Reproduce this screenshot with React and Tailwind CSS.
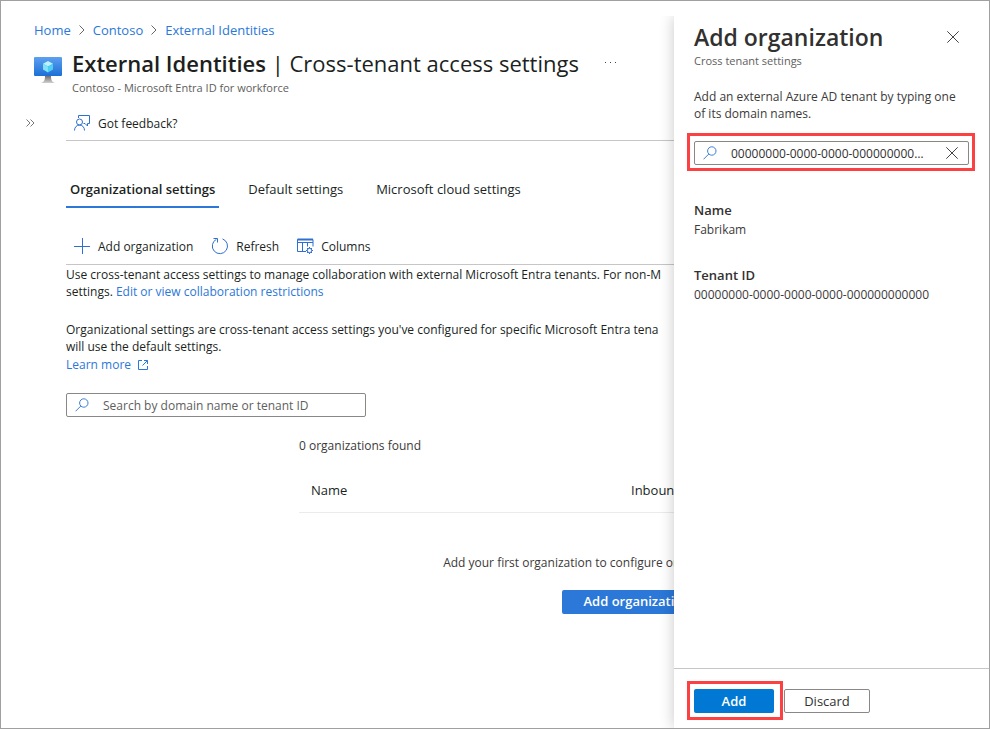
import React from "react";

const link = "text-[#2b78d8] hover:underline";

function Chevron() {
  return (
    <svg className="h-3 w-2 shrink-0" viewBox="0 0 8 12" fill="none" stroke="#666" aria-hidden="true">
      <path d="M1.5 1.5 6 6 1.5 10.5" />
    </svg>
  );
}

function MonitorIcon() {
  return (
    <svg className="mt-[9px] h-7 w-7 shrink-0" viewBox="0 0 28 28" aria-hidden="true">
      <defs>
        <linearGradient id="screen" x1="0" y1="0" x2="0" y2="1">
          <stop offset="0" stopColor="#5ea0ef" />
          <stop offset="1" stopColor="#1b6fd6" />
        </linearGradient>
        <linearGradient id="stand" x1="0" y1="0" x2="0" y2="1">
          <stop offset="0" stopColor="#707070" />
          <stop offset="1" stopColor="#d0d0d0" />
        </linearGradient>
      </defs>
      <rect x="0" y="1" width="28" height="19" rx="1" fill="url(#screen)" />
      <path d="M11 20h6c0 4 1 6 4 7H7c3-1 4-3 4-7z" fill="url(#stand)" />
      <path d="M14 5l5 2.8-5 2.8-5-2.8z" fill="#b8f2fd" />
      <path d="M9 7.8l5 2.8v5.8l-5-2.9z" fill="#7fe2fb" />
      <path d="M19 7.8l-5 2.8v5.8l5-2.9z" fill="#50cdf5" />
    </svg>
  );
}

function FeedbackIcon() {
  return (
    <svg className="h-4 w-4 shrink-0" viewBox="0 0 16 16" fill="none" stroke="#2f6fd0" aria-hidden="true">
      <circle cx="5.5" cy="7" r="3" />
      <path d="M.5 15.5c0-3.2 2-5.4 5-5.4s5 2.2 5 5.4M4.5 3V.5h11v8h-2v2.5L11 8.5H9.5" />
    </svg>
  );
}

function PlusIcon() {
  return (
    <svg className="h-4 w-4 shrink-0" viewBox="0 0 16 16" fill="none" stroke="#2f6fd0" aria-hidden="true">
      <path d="M8.5 0v16M0 8.5h16" />
    </svg>
  );
}

function RefreshIcon() {
  return (
    <svg className="h-[18px] w-[18px] shrink-0" viewBox="0 0 18 18" fill="none" stroke="#2f6fd0" aria-hidden="true">
      <path d="M11.5 1.9A7.6 7.6 0 1 1 5.4 2.3M2.5 1.5h4v4" />
    </svg>
  );
}

function ColumnsIcon() {
  return (
    <svg className="h-[17px] w-[17px] shrink-0" viewBox="0 0 17 17" fill="none" stroke="#2f6fd0" aria-hidden="true">
      <path d="M9 13.5H.5v-12h15.5v7M.5 4.5H16M5.5 4.5v9M10.5 4.5v4" />
      <path d="M.5 1.5H16" strokeWidth="2" />
      <circle cx="12.5" cy="12.5" r="2.2" />
      <path d="M12.5 9v1.3M12.5 14.7V16M9 12.5h1.3M14.7 12.5H16M10 10l1 1M14 14l1 1M15 10l-1 1M11 14l-1 1" />
    </svg>
  );
}

function SearchIcon() {
  return (
    <svg className="h-[14px] w-[14px] shrink-0" viewBox="0 0 14 14" fill="none" stroke="#3b7fd6" aria-hidden="true">
      <circle cx="8.8" cy="5" r="4.2" />
      <path d="M5.8 8 .5 13.3" />
    </svg>
  );
}

function CloseIcon() {
  return (
    <svg className="h-3 w-3" viewBox="0 0 12 12" fill="none" stroke="#444" aria-hidden="true">
      <path d="M.3.3l11.4 11.4M11.7.3.3 11.7" />
    </svg>
  );
}

function ExternalIcon() {
  return (
    <svg className="h-[10px] w-[10px]" viewBox="0 0 10 10" fill="none" stroke="#2b78d8" aria-hidden="true">
      <path d="M4 .5H.5v9h9V6M6 .5h3.5V4M9.5.5l-5 5" />
    </svg>
  );
}

function Main() {
  return (
    <main className="min-w-0 flex-1 overflow-hidden whitespace-nowrap pt-[19px]">
      <nav aria-label="Breadcrumb" className="flex h-5 items-center gap-[7px] pl-[33px] text-[13px]">
        <a href="#home" className={link}>Home</a>
        <Chevron />
        <a href="#contoso" className={link}>Contoso</a>
        <Chevron />
        <a href="#external" className={link}>External Identities</a>
      </nav>

      <header className="mt-[7px] flex gap-[10px] pl-[33px]">
        <MonitorIcon />
        <div>
          <div className="flex items-center gap-[26px]">
            <h1 className="text-[22px] leading-8">
              <span className="font-semibold">External Identities</span> | Cross-tenant access settings
            </h1>
            <button type="button" aria-label="More options" className="flex h-4 items-center">
              <svg className="h-1 w-3" viewBox="0 0 12 4" fill="#444" shapeRendering="crispEdges" aria-hidden="true">
                <path d="M0 1h1v1H0zM5 1h1v1H5zM10 1h1v1h-1z" />
              </svg>
            </button>
          </div>
          <p className="mt-px text-[11px] leading-4 text-[#605e5c]">Contoso - Microsoft Entra ID for workforce</p>
        </div>
      </header>

      <div className="mt-[10px] flex">
        <div className="flex h-[34px] w-[65px] shrink-0 items-center pl-[25px]">
          <button type="button" aria-label="Expand menu">
            <svg className="h-2 w-[9px]" viewBox="0 0 9 8" fill="none" stroke="#777" aria-hidden="true">
              <path d="M.5.5 4 4 .5 7.5M4.5.5 8 4 4.5 7.5" />
            </svg>
          </button>
        </div>

        <div className="min-w-0 flex-1">
          <div className="flex h-[35px] items-center border-b border-[#c8c6c4] pl-2">
            <button type="button" className="flex items-center gap-2">
              <FeedbackIcon />
              Got feedback?
            </button>
          </div>

          <div role="tablist" className="mt-[30px] flex h-[37px] gap-[25px] text-[13px]">
            <button type="button" role="tab" aria-selected="true" className="border-b-2 border-[#2b78d8] px-1 pt-px font-semibold">
              Organizational settings
            </button>
            <button type="button" role="tab" aria-selected="false" className="border-b-2 border-transparent px-1 pt-px">
              Default settings
            </button>
            <button type="button" role="tab" aria-selected="false" className="border-b-2 border-transparent px-1 pt-px">
              Microsoft cloud settings
            </button>
          </div>

          <div className="mt-5 flex h-[37px] items-center gap-[18px] border-b border-[#c8c6c4] pl-2">
            <button type="button" className="flex items-center gap-2">
              <PlusIcon />
              Add organization
            </button>
            <button type="button" className="flex items-center gap-[7px]">
              <RefreshIcon />
              Refresh
            </button>
            <button type="button" className="flex items-center gap-[7px]">
              <ColumnsIcon />
              Columns
            </button>
          </div>

          <p className="pt-px">
            Use cross-tenant access settings to manage collaboration with external Microsoft Entra tenants. For non-M
            <br />
            settings. <a href="#restrictions" className={link}>Edit or view collaboration restrictions</a>
          </p>
          <p className="mt-[21px]">
            Organizational settings are cross-tenant access settings you've configured for specific Microsoft Entra tena
            <br />
            will use the default settings.
          </p>
          <a href="#learn" className="mt-px flex w-fit items-center gap-[7px] text-[#2b78d8]">
            Learn more
            <ExternalIcon />
          </a>

          <label className="mt-5 flex h-6 w-[300px] items-center gap-[14px] rounded-[2px] border border-[#8a8886] pl-2">
            <SearchIcon />
            <input
              type="text"
              aria-label="Search by domain name or tenant ID"
              placeholder="Search by domain name or tenant ID"
              className="min-w-0 flex-1 bg-transparent outline-none placeholder:text-[#605e5c]"
            />
          </label>

          <section className="ml-[233px] mt-5 w-[676px]">
            <p className="text-[#3b3a39]">0 organizations found</p>
            <table className="mt-[15px] w-full table-fixed">
              <thead>
                <tr className="h-[43px] border-b border-[#edebe9] text-left text-[13px]">
                  <th className="w-[320px] px-3 font-medium">Name</th>
                  <th className="px-3 font-medium">Inbound access</th>
                </tr>
              </thead>
            </table>
            <div className="mt-[41px] flex flex-col items-center gap-[19px]">
              <p className="text-[#3b3a39]">Add your first organization to configure organization-specific settings.</p>
              <button type="button" className="h-6 w-[150px] rounded-[2px] bg-[#2b78d8] text-[13px] font-semibold text-white">
                Add organization
              </button>
            </div>
          </section>
        </div>
      </div>
    </main>
  );
}

function Panel() {
  return (
    <aside className="relative mt-[15px] flex w-[315px] shrink-0 flex-col bg-white text-[#323130] shadow-[0_0_14px_rgba(0,0,0,0.22)] [clip-path:inset(0_0_0_-20px)]">
      <div className="flex-1 px-5">
        <div className="flex items-start justify-between pt-[5px]">
          <h2 className="text-[23px] font-semibold leading-8">Add organization</h2>
          <button type="button" aria-label="Close" className="mr-[10px] mt-[10px]">
            <CloseIcon />
          </button>
        </div>
        <p className="text-[11px] leading-4 text-[#605e5c]">Cross tenant settings</p>
        <p className="mt-[19px] text-[#3b3a39]">
          Add an external Azure AD tenant by typing one
          <br />
          of its domain names.
        </p>

        <div className="-ml-[7px] -mr-[6px] mt-[11px] border-[3px] border-[#fb4141] pb-[3px] pl-1 pr-[3px] pt-[5px]">
          <div className="flex h-6 items-center gap-[14px] rounded-[2px] border border-[#8a8886] pl-2 pr-[10px]">
            <SearchIcon />
            <input
              type="text"
              aria-label="Tenant ID or domain name"
              defaultValue="00000000-0000-0000-000000000000"
              className="mr-1 min-w-0 flex-1 truncate bg-transparent outline-none"
            />
            <button type="button" aria-label="Clear">
              <CloseIcon />
            </button>
          </div>
        </div>

        <dl className="mt-[29px] leading-5">
          <dt className="text-[13px] font-semibold">Name</dt>
          <dd className="text-[#3b3a39]">Fabrikam</dd>
          <dt className="mt-[25px] text-[13px] font-semibold">Tenant ID</dt>
          <dd className="text-[#3b3a39]">00000000-0000-0000-0000-000000000000</dd>
        </dl>
      </div>

      <footer className="flex h-[60px] items-start gap-px border-t border-[#c8c6c4] pl-[13px] pt-3 text-[13px]">
        <div className="border-[3px] border-[#fb4141] pb-1 pl-1 pr-[6px] pt-[5px]">
          <button type="button" className="block h-6 w-20 rounded-[2px] bg-[#0078d4] font-semibold text-white">
            Add
          </button>
        </div>
        <button type="button" className="mt-2 h-6 w-[86px] rounded-[2px] border border-[#8a8886]">
          Discard
        </button>
      </footer>
    </aside>
  );
}

export default function App() {
  return (
    <div className="flex min-h-screen border border-[#a0a0a0] bg-white font-['Open_Sans','Noto_Sans',sans-serif] text-[12px] leading-[17px] text-[#201f1e]">
      <Main />
      <Panel />
    </div>
  );
}
